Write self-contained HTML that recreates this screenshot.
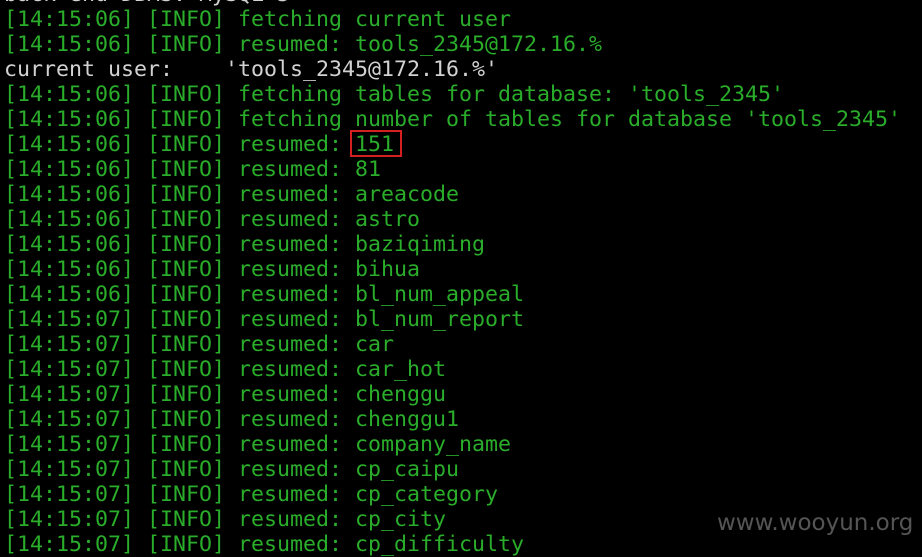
<!DOCTYPE html>
<html><head><style>
body{margin:0;background:#000;width:922px;height:555px;overflow:hidden;position:relative}
pre{position:absolute;left:4px;top:-18px;margin:0;font-family:"DejaVu Sans Mono","Liberation Mono",monospace;font-size:21.6px;line-height:25px;color:#2aad2a;letter-spacing:0}
.w{color:#d2d2d2}
.box{position:absolute;left:350px;top:130px;width:52px;height:27px;border:2px solid #d42020;box-sizing:border-box}
.wm{position:absolute;left:717px;top:510px;font-family:"DejaVu Sans","Liberation Sans",sans-serif;font-size:23px;color:#555}
</style></head><body>
<pre><span class="w">back-end DBMS: MySQL 5</span>
[14:15:06] [INFO] fetching current user
[14:15:06] [INFO] resumed: tools_2345@172.16.%
<span class="w">current user:    'tools_2345@172.16.%'</span>
[14:15:06] [INFO] fetching tables for database: 'tools_2345'
[14:15:06] [INFO] fetching number of tables for database 'tools_2345'
[14:15:06] [INFO] resumed: 151
[14:15:06] [INFO] resumed: 81
[14:15:06] [INFO] resumed: areacode
[14:15:06] [INFO] resumed: astro
[14:15:06] [INFO] resumed: baziqiming
[14:15:06] [INFO] resumed: bihua
[14:15:06] [INFO] resumed: bl_num_appeal
[14:15:07] [INFO] resumed: bl_num_report
[14:15:07] [INFO] resumed: car
[14:15:07] [INFO] resumed: car_hot
[14:15:07] [INFO] resumed: chenggu
[14:15:07] [INFO] resumed: chenggu1
[14:15:07] [INFO] resumed: company_name
[14:15:07] [INFO] resumed: cp_caipu
[14:15:07] [INFO] resumed: cp_category
[14:15:07] [INFO] resumed: cp_city
[14:15:07] [INFO] resumed: cp_difficulty</pre>
<div class="box"></div>
<div class="wm">www.wooyun.org</div>
</body></html>
